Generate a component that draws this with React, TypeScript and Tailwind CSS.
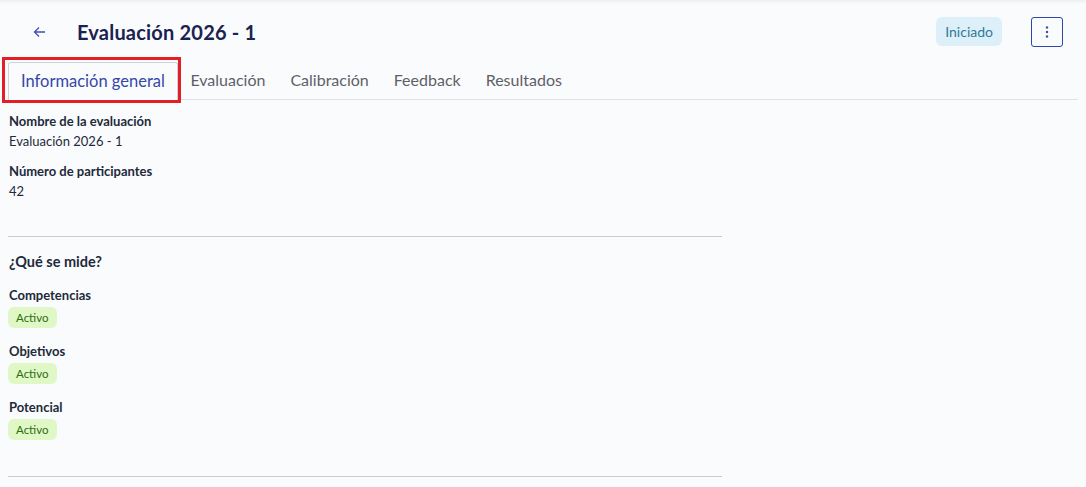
import React from "react";

const items = ["Competencias", "Objetivos", "Potencial"];
const tabs = ["Evaluación", "Calibración", "Feedback", "Resultados"];

const Badge = () => (
  <span className="inline-flex items-center h-[21px] px-[8px] -ml-[1px] rounded-[6px] bg-[#dff8c6] text-[#2f6b12] text-[11.5px] leading-none">
    Activo
  </span>
);

const App = () => {
  return (
    <div className="min-h-screen bg-[#fafbfd] text-[#222a3a] font-['Lato','Noto_Sans',sans-serif] relative">
      <div className="h-[4px] bg-gradient-to-b from-[#eceef2] to-[#fafbfd]" />
      {/* header */}
      <div className="flex items-center h-[56px] -mt-[4px] pt-[7px] pl-[32px] pr-[23px]">
        <button className="w-[14px] h-[14px] flex items-center justify-center text-[#3f51b5]">
          <svg width="13" height="12" viewBox="0 0 13 12" fill="none" stroke="currentColor" strokeWidth="1.3">
            <path d="M12 6H1.5M6 1.5L1.5 6L6 10.5" />
          </svg>
        </button>
        <h1 className="ml-[31px] text-[20px] font-bold text-[#1b2150] tracking-[0.2px]">Evaluación 2026 - 1</h1>
        <div className="ml-auto flex items-center gap-[29px]">
          <span className="h-[29px] px-[9px] flex items-center rounded-[6px] bg-[#ddf0fa] text-[#2f7a98] text-[14px]">Iniciado</span>
          <button className="w-[32px] h-[30px] flex items-center justify-center rounded-[3px] border border-[#2f47a8] text-[#3b4ea8]">
            <svg width="4" height="14" viewBox="0 0 4 14" fill="currentColor">
              <circle cx="2" cy="2.5" r="1.2" />
              <circle cx="2" cy="7" r="1.2" />
              <circle cx="2" cy="11.5" r="1.2" />
            </svg>
          </button>
        </div>
      </div>
      {/* tabs */}
      <div className="mx-[8px] mt-[6px] flex items-end border-b border-[#e0e1e4] h-[38px] relative">
        <div className="relative h-[38px] px-[12px] flex items-center rounded-t-[3px] border border-b-0 border-[#cfd2d8] bg-[#fafbfd] text-[#3447a8] text-[16.5px] -mb-px">
          Información general
          <div className="absolute -left-[7px] -top-[6px] -right-[4px] -bottom-[3px] border-[3px] border-[#e21f26]" />
        </div>
        <div className="flex items-center h-[38px] text-[16px] text-[#5e6068]">
          {tabs.map((t) => (
            <span key={t} className="px-[12.5px]">{t}</span>
          ))}
        </div>
      </div>
      {/* content */}
      <div className="px-[9px] w-[731px]">
        <div className="pt-[12px] text-[13px]">
          <div className="font-bold leading-[18px]">Nombre de la evaluación</div>
          <div className="leading-[18px] mt-[2px]">Evaluación 2026 - 1</div>
          <div className="font-bold leading-[18px] mt-[12px]">Número de participantes</div>
          <div className="leading-[18px] mt-[2px]">42</div>
        </div>
        <div className="mt-[36px] border-t border-[#c9cbce] -ml-[1px]" />
        <div className="mt-[16px] text-[14.5px] font-bold leading-[18px]">¿Qué se mide?</div>
        <div className="mt-[15px] flex flex-col gap-[14px] text-[13px]">
          {items.map((it) => (
            <div key={it} className="flex flex-col gap-[3px] items-start">
              <div className="font-bold leading-[18px]">{it}</div>
              <Badge />
            </div>
          ))}
        </div>
        <div className="mt-[36px] border-t border-[#c9cbce] -ml-[1px]" />
      </div>
    </div>
  );
};

export default App;
